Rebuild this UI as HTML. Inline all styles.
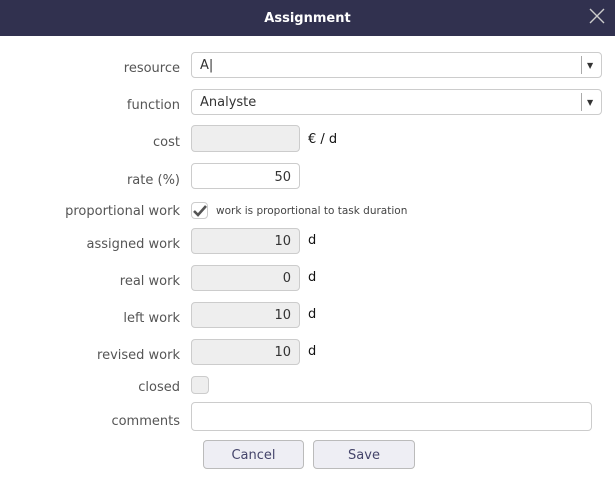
<html><head><style>
body{margin:0;width:615px;height:482px;background:#fff;font-family:"DejaVu Sans","Liberation Sans",sans-serif;position:relative;overflow:hidden}
.hd{position:absolute;left:0;top:0;width:615px;height:36px;background:#31314f;color:#fff;font-weight:bold;font-size:13px;text-align:center;line-height:37px}
.l{position:absolute;right:435px;font-size:13px;color:#555;white-space:nowrap}
.i{position:absolute;box-sizing:border-box;border:1px solid #ccc;border-radius:4px;background:#fff;font-size:13px;color:#333;line-height:26px;padding:0 8px}
.g{background:#eee;text-align:right}
.u{position:absolute;left:308px;font-size:13px;color:#111}
.b{position:absolute;top:440px;height:29px;box-sizing:border-box;border:1px solid #bbb;border-radius:4px;background:#eeeef4;color:#44446a;font-size:13px;text-align:center;line-height:29px}
</style></head><body>
<div class="hd">Assignment</div>
<svg style="position:absolute;left:589px;top:8px" width="16" height="16"><path d="M1 1L15 15M15 1L1 15" stroke="#ccc" stroke-width="1.4"/></svg>

<div class="l" style="top:61px">resource</div>
<div class="i" style="left:191px;top:52px;width:411px;height:26px">A|<span style="position:absolute;left:389px;top:3px;height:18px;border-left:1px solid #aaa"></span><span style="position:absolute;left:395px;top:0;font-size:8px">▼</span></div>
<div class="l" style="top:98px">function</div>
<div class="i" style="left:191px;top:89px;width:411px;height:26px">Analyste<span style="position:absolute;left:389px;top:3px;height:18px;border-left:1px solid #aaa"></span><span style="position:absolute;left:395px;top:0;font-size:8px">▼</span></div>
<div class="l" style="top:135px">cost</div>
<div class="i g" style="left:191px;top:125px;width:109px;height:27px"></div>
<div class="u" style="top:132px">€ / d</div>
<div class="l" style="top:173px">rate (%)</div>
<div class="i" style="left:191px;top:163px;width:109px;height:26px;text-align:right;line-height:28px">50</div>
<div class="l" style="top:204px">proportional work</div>
<div class="i" style="left:191px;top:202px;width:17px;height:17px;padding:0"><svg width="15" height="15" style="position:absolute;left:0;top:0"><path d="M2 8L6 12L14 3" stroke="#555" stroke-width="2.6" fill="none"/></svg></div>
<div style="position:absolute;left:216px;top:205px;font-size:10.5px;color:#444">work is proportional to task duration</div>
<div class="l" style="top:237px">assigned work</div>
<div class="i g" style="left:191px;top:228px;width:109px;height:26px;line-height:25px">10</div>
<div class="u" style="top:233px">d</div>
<div class="l" style="top:274px">real work</div>
<div class="i g" style="left:191px;top:265px;width:109px;height:26px;line-height:25px">0</div>
<div class="u" style="top:270px">d</div>
<div class="l" style="top:311px">left work</div>
<div class="i g" style="left:191px;top:302px;width:109px;height:26px;line-height:25px">10</div>
<div class="u" style="top:307px">d</div>
<div class="l" style="top:348px">revised work</div>
<div class="i g" style="left:191px;top:339px;width:109px;height:26px;line-height:25px">10</div>
<div class="u" style="top:344px">d</div>
<div class="l" style="top:380px">closed</div>
<div class="i" style="left:191px;top:376px;width:18px;height:18px;background:#eee"></div>
<div class="l" style="top:414px">comments</div>
<div class="i" style="left:191px;top:402px;width:401px;height:29px"></div>
<div class="b" style="left:203px;width:101px">Cancel</div>
<div class="b" style="left:313px;width:102px">Save</div>
</body></html>
